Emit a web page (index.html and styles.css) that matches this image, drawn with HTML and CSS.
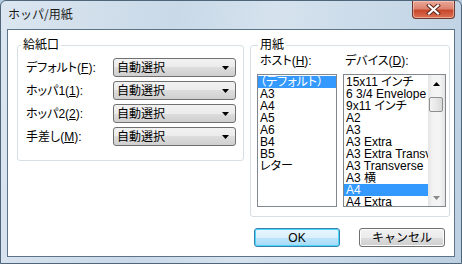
FILE: index.html
```html
<!DOCTYPE html>
<html lang="ja">
<head>
  <meta charset="UTF-8">
  <title>ホッパ/用紙</title>
  <link rel="stylesheet" href="styles.css">
</head>
<body>
  <div class="window">
    <div class="titlebar">
      <span class="title">ホッパ/用紙</span>
      <button class="close" type="button">
        <svg width="17" height="11" viewBox="0 0 17 11">
          <path d="M4 1.5 L13 9.5 M13 1.5 L4 9.5" stroke="#5a2418" stroke-width="4" stroke-linecap="square"/>
          <path d="M4 1.5 L13 9.5 M13 1.5 L4 9.5" stroke="#fff" stroke-width="2.2" stroke-linecap="square"/>
        </svg>
      </button>
    </div>

    <div class="client">
      <div class="groups">
        <fieldset class="group feed">
          <legend>給紙口</legend>
          <div class="row">
            <label>デフォルト(<u>F</u>):</label>
            <div class="combo"><span>自動選択</span><svg width="7" height="4" viewBox="0 0 7 4"><path d="M0 0 H7 L3.5 4 Z" fill="#000"/></svg></div>
          </div>
          <div class="row">
            <label>ホッパ1(<u>1</u>):</label>
            <div class="combo"><span>自動選択</span><svg width="7" height="4" viewBox="0 0 7 4"><path d="M0 0 H7 L3.5 4 Z" fill="#000"/></svg></div>
          </div>
          <div class="row">
            <label>ホッパ2(<u>2</u>):</label>
            <div class="combo"><span>自動選択</span><svg width="7" height="4" viewBox="0 0 7 4"><path d="M0 0 H7 L3.5 4 Z" fill="#000"/></svg></div>
          </div>
          <div class="row">
            <label>手差し(<u>M</u>):</label>
            <div class="combo"><span>自動選択</span><svg width="7" height="4" viewBox="0 0 7 4"><path d="M0 0 H7 L3.5 4 Z" fill="#000"/></svg></div>
          </div>
        </fieldset>

        <fieldset class="group paper">
          <legend>用紙</legend>
          <div class="list-labels">
            <span class="host-label">ホスト(<u>H</u>):</span>
            <span>デバイス(<u>D</u>):</span>
          </div>
          <div class="lists">
            <ul class="listbox host">
              <li class="selected">（デフォルト）</li>
              <li>A3</li>
              <li>A4</li>
              <li>A5</li>
              <li>A6</li>
              <li>B4</li>
              <li>B5</li>
              <li>レター</li>
            </ul>
            <div class="listbox device">
              <ul>
                <li>15x11 インチ</li>
                <li>6 3/4 Envelope</li>
                <li>9x11 インチ</li>
                <li>A2</li>
                <li>A3</li>
                <li>A3 Extra</li>
                <li>A3 Extra Transverse</li>
                <li>A3 Transverse</li>
                <li>A3 横</li>
                <li class="selected">A4</li>
                <li>A4 Extra</li>
              </ul>
              <div class="scrollbar">
                <div class="sb-arrow"><svg width="7" height="4" viewBox="0 0 7 4"><path d="M3.5 0 L7 4 H0 Z" fill="#000"/></svg></div>
                <div class="sb-thumb"></div>
                <div class="sb-track"></div>
                <div class="sb-arrow"><svg width="7" height="4" viewBox="0 0 7 4"><path d="M0 0 H7 L3.5 4 Z" fill="#8a8a8a"/></svg></div>
              </div>
            </div>
          </div>
        </fieldset>
      </div>

      <div class="buttons">
        <button class="btn default" type="button">OK</button>
        <button class="btn" type="button">キャンセル</button>
      </div>
    </div>
  </div>
</body>
</html>
```

FILE: styles.css
```css
* {
  margin: 0;
  padding: 0;
  box-sizing: border-box;
}

body {
  font-family: 'Liberation Sans', 'Noto Sans CJK JP', sans-serif;
  font-size: 12px;
  font-feature-settings: "palt";
  color: #000;
  background: #b8cde0;
}

u {
  text-decoration: underline;
  text-underline-offset: 1px;
}

.window {
  width: 462px;
  height: 264px;
  border: 1px solid #4f6579;
  border-radius: 6px 6px 0 0;
  padding: 0 6px 6px;
  background: linear-gradient(100deg, #dbe6f0 0%, #c9d9e8 35%, #d5e2ee 55%, #bcd0e2 100%);
}

.titlebar {
  height: 28px;
  display: flex;
  justify-content: space-between;
  align-items: flex-start;
}

.title {
  padding: 6px 0 0 1px;
  font-family: 'Noto Sans CJK JP', sans-serif;
  font-feature-settings: normal;
  font-size: 12px;
  line-height: 14px;
  color: #1a1a1a;
}

.close {
  width: 43px;
  height: 18px;
  border: 1px solid #6b3a30;
  border-top: none;
  border-radius: 0 0 4px 4px;
  background: linear-gradient(#eba797 0%, #dc8470 45%, #c8482c 55%, #dc7256 100%);
  display: flex;
  align-items: center;
  justify-content: center;
  box-shadow: inset 0 0 0 1px rgba(255, 220, 210, 0.5);
}

.client {
  height: 228px;
  background: #fff;
  border: 1px solid #5d7388;
}

.groups {
  display: flex;
  gap: 6px;
  padding: 8px 0 0 9px;
  align-items: flex-start;
}

.group {
  border: 1px solid #d5dfe5;
  border-radius: 3px;
}

.group legend {
  padding: 0 2px;
  line-height: 14px;
  color: #000;
}

.feed {
  width: 227px;
  height: 123px;
  padding: 6px 7px 0 8px;
  display: flex;
  flex-direction: column;
  gap: 4px;
}

.feed legend {
  margin-left: -5px;
}

.row {
  display: flex;
  align-items: center;
}

.row label {
  width: 87px;
  line-height: 14px;
}

.combo {
  width: 123px;
  height: 19px;
  border: 1px solid #707070;
  border-radius: 3px;
  background: linear-gradient(#f2f2f2 0%, #ebebeb 50%, #dddddd 50%, #cfcfcf 100%);
  display: flex;
  align-items: center;
  justify-content: space-between;
  padding: 0 6px 0 3px;
  line-height: 14px;
}

.paper {
  width: 199px;
  height: 179px;
  padding: 2px 3px 0 6px;
}

.paper legend {
  margin-left: 1px;
}

.list-labels {
  display: flex;
  line-height: 14px;
  padding-left: 3px;
  margin-bottom: 6px;
}

.host-label {
  width: 85px;
}

.lists {
  display: flex;
  gap: 6px;
}

.listbox {
  height: 133px;
  border: 1px solid #828790;
  background: #fff;
  list-style: none;
  overflow: hidden;
}

.listbox li {
  height: 12px;
  line-height: 12px;
  padding-left: 2px;
  white-space: nowrap;
  overflow: hidden;
}

.listbox li.selected {
  background: #3399ff;
  color: #fff;
}

.host {
  width: 80px;
  padding-top: 1px;
}

.device {
  width: 103px;
  display: flex;
}

.device ul {
  flex: 1;
  list-style: none;
  padding-top: 1px;
  overflow: hidden;
}

.scrollbar {
  width: 17px;
  display: flex;
  flex-direction: column;
  background: linear-gradient(to right, #e4e4e4, #f4f4f4 30%, #f4f4f4 70%, #e4e4e4);
}

.sb-arrow {
  height: 17px;
  display: flex;
  align-items: center;
  justify-content: center;
}

.sb-thumb {
  height: 15px;
  margin: 5px 2px 0 1px;
  border: 1px solid #8e8f8f;
  border-radius: 2px;
  background: linear-gradient(to right, #f3f3f3, #e8e8e8 50%, #d9d9d9);
}

.sb-track {
  flex: 1;
}

.buttons {
  display: flex;
  justify-content: flex-end;
  gap: 19px;
  margin-top: 11px;
  padding-right: 9px;
}

.btn {
  width: 86px;
  height: 19px;
  border: 1px solid #707070;
  border-radius: 3px;
  background: linear-gradient(#f2f2f2 0%, #ebebeb 50%, #dddddd 50%, #cfcfcf 100%);
  font-family: inherit;
  font-size: 12px;
  line-height: 14px;
  color: #000;
  box-shadow: inset 0 0 0 1px #fcfcfc;
}

.btn.default {
  border-color: #3c7fb1;
  background: linear-gradient(#eaf6fd 0%, #d9f0fc 50%, #bee6fd 50%, #a7d9f5 100%);
  box-shadow: inset 0 0 0 1px #48d8fb;
}
```
